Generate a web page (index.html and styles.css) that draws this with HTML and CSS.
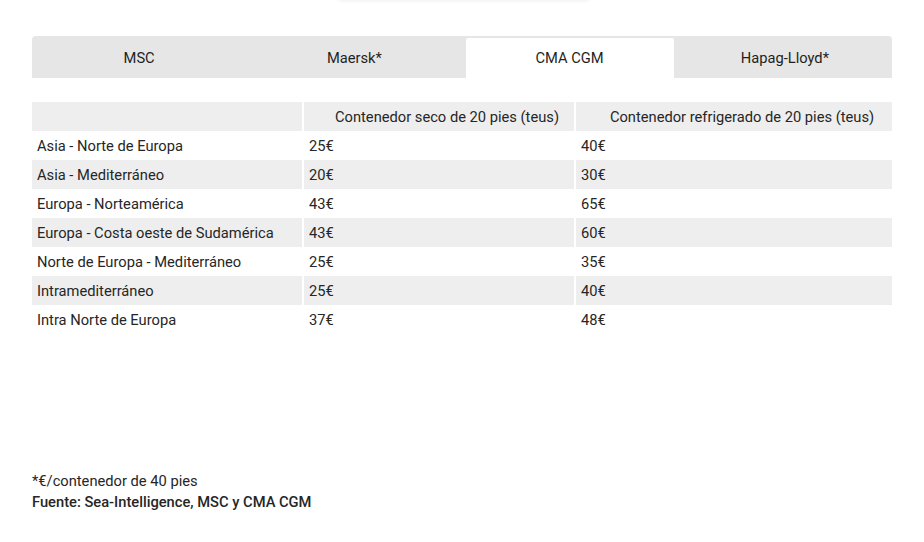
FILE: index.html
```
<!DOCTYPE html>
<html lang="es">
<head>
<meta charset="utf-8">
<link rel="stylesheet" href="styles.css">
</head>
<body>
<div class="topshade"></div>
<main class="wrap">
  <nav class="tabs">
    <div class="tab">MSC</div>
    <div class="tab">Maersk*</div>
    <div class="tab active">CMA CGM</div>
    <div class="tab">Hapag-Lloyd*</div>
  </nav>
  <table class="rates">
    <colgroup>
      <col class="c1"><col class="c2"><col class="c3">
    </colgroup>
    <thead>
      <tr><th></th><th>Contenedor seco de 20 pies (teus)</th><th>Contenedor refrigerado de 20 pies (teus)</th></tr>
    </thead>
    <tbody>
      <tr><td>Asia - Norte de Europa</td><td>25€</td><td>40€</td></tr>
      <tr><td>Asia - Mediterráneo</td><td>20€</td><td>30€</td></tr>
      <tr><td>Europa - Norteamérica</td><td>43€</td><td>65€</td></tr>
      <tr><td>Europa - Costa oeste de Sudamérica</td><td>43€</td><td>60€</td></tr>
      <tr><td>Norte de Europa - Mediterráneo</td><td>25€</td><td>35€</td></tr>
      <tr><td>Intramediterráneo</td><td>25€</td><td>40€</td></tr>
      <tr><td>Intra Norte de Europa</td><td>37€</td><td>48€</td></tr>
    </tbody>
  </table>
  <footer class="notes">
    <p>*€/contenedor de 40 pies</p>
    <p class="source">Fuente: Sea-Intelligence, MSC y CMA CGM</p>
  </footer>
</main>
</body>
</html>
```
FILE: styles.css
```
html, body {
  margin: 0;
  padding: 0;
  background: #ffffff;
}
body {
  font-family: Roboto, "Liberation Sans", sans-serif;
  font-size: 14.7px;
  color: #262626;
  overflow: hidden;
}
.topshade {
  width: 254px;
  height: 10px;
  margin: -10px 0 0 337px;
  box-shadow: 0 1px 4px rgba(0, 0, 0, 0.07);
  border-radius: 0 0 6px 6px;
}
.wrap {
  width: 860px;
  margin-left: 32px;
}
.tabs {
  margin-top: 36px;
  height: 42px;
  box-sizing: border-box;
  padding: 2px 3px 0;
  background: #e6e6e6;
  border-radius: 4px 4px 0 0;
  display: grid;
  grid-template-columns: repeat(4, 1fr);
  column-gap: 7px;
}
.tab {
  display: flex;
  align-items: center;
  justify-content: center;
  color: #1f1f1f;
  padding-bottom: 1px;
}
.tab.active {
  background: #ffffff;
  border-radius: 2px 2px 0 0;
}
.rates {
  margin-top: 24px;
  width: 860px;
  border-collapse: collapse;
  table-layout: fixed;
}
.c1 { width: 271px; }
.c2 { width: 272px; }
.c3 { width: 317px; }
.rates th, .rates td {
  height: 29px;
  padding: 0 0 0 5px;
  box-sizing: border-box;
  font-weight: 400;
  white-space: nowrap;
  text-align: left;
  vertical-align: middle;
}
.rates th + th, .rates td + td {
  border-left: 2px solid #ffffff;
}
.rates thead th {
  background: #eeeeee;
  text-align: center;
  padding-left: 16px;
}
.rates tbody tr:nth-child(even) td {
  background: #eeeeee;
}
.notes {
  margin-top: 137px;
}
.notes p {
  margin: 0;
  line-height: 21px;
}
.notes .source {
  font-weight: 500;
}
```
